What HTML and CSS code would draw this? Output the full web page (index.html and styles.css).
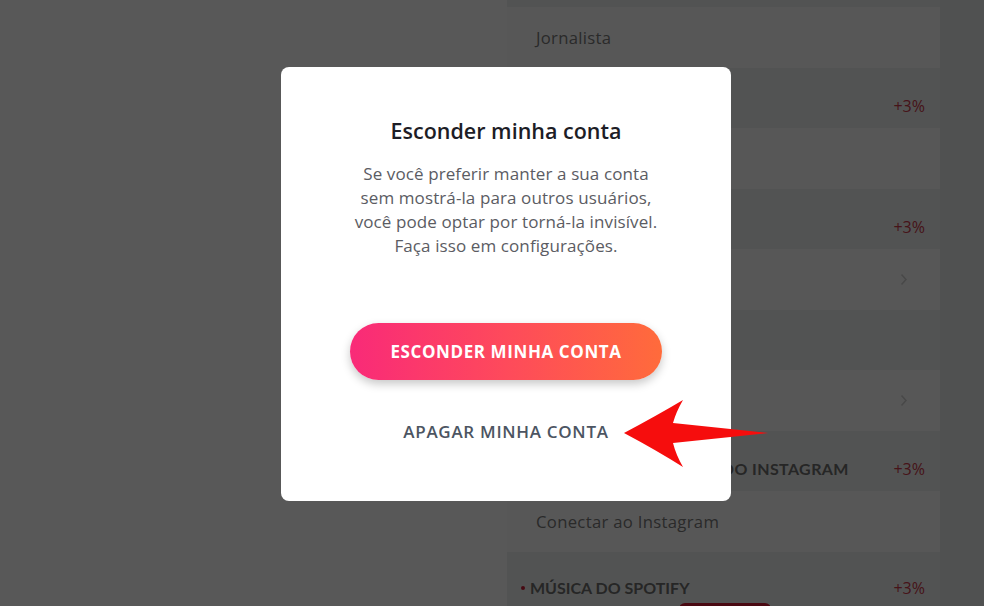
FILE: index.html
```html
<!DOCTYPE html>
<html lang="pt-BR">
<head>
<meta charset="utf-8">
<title>Configurações</title>
<link rel="stylesheet" href="styles.css">
</head>
<body>
<div class="page">
  <aside class="side"></aside>
  <main class="panel">
    <div class="row"><span class="row-text">Jornalista</span></div>
    <div class="head"><span class="head-title"></span><span class="pct">+3%</span></div>
    <div class="row"></div>
    <div class="head"><span class="head-title"></span><span class="pct">+3%</span></div>
    <div class="row"><span></span><svg class="chev" width="8" height="13" viewBox="0 0 8 13"><path d="M1.5 1.5 L6 6.5 L1.5 11.5" fill="none" stroke="#cfcfcf" stroke-width="1.6"/></svg></div>
    <div class="head"><span class="head-title"></span></div>
    <div class="row"><span></span><svg class="chev" width="8" height="13" viewBox="0 0 8 13"><path d="M1.5 1.5 L6 6.5 L1.5 11.5" fill="none" stroke="#cfcfcf" stroke-width="1.6"/></svg></div>
    <div class="head"><span class="head-title wide"><i class="dot"></i>ÚLTIMAS PUBLICAÇÕES DO INSTAGRAM</span><span class="pct">+3%</span></div>
    <div class="row"><span class="row-text">Conectar ao Instagram</span></div>
    <div class="head head-last"><span class="head-title"><i class="dot"></i>MÚSICA DO SPOTIFY</span><span class="pct">+3%</span></div>
    <div class="spot"><span class="spot-btn"></span></div>
  </main>
  <div class="gutter"></div>
</div>

<div class="overlay">
  <section class="modal">
    <h2 class="modal-title">Esconder minha conta</h2>
    <p class="modal-text">Se você preferir manter a sua conta<br>sem mostrá-la para outros usuários,<br>você pode optar por torná-la invisível.<br>Faça isso em configurações.</p>
    <button class="btn-primary">ESCONDER MINHA CONTA</button>
    <a class="btn-link" href="#">APAGAR MINHA CONTA</a>
  </section>
  <svg class="pointer" width="150" height="78" viewBox="0 0 150 78" aria-hidden="true">
    <path d="M4 38 Q36 21 63 5 Q56 17 53 28 L148 38 L53 48 Q56 60 63 72 Q36 55 4 38 Z" fill="#f60d0d"/>
  </svg>
</div>
</body>
</html>
```

FILE: styles.css
```css
html, body {
  margin: 0;
  height: 100%;
}

body {
  font-family: "Open Sans", "Lato", sans-serif;
  background: #eceeed;
  overflow: hidden;
}

.page {
  display: grid;
  grid-template-columns: 507px 433px 1fr;
  height: 606px;
  overflow: hidden;
}

.side {
  background: #fbfbfb;
}

.panel {
  background: #eceeed;
  padding-top: 7px;
  display: flex;
  flex-direction: column;
}

.gutter {
  background: #e6e9e8;
}

.row {
  height: 61px;
  flex: none;
  background: #fafafa;
  display: flex;
  align-items: center;
  justify-content: space-between;
  padding: 0 32px 0 29px;
}

.row-text {
  font-size: 16.7px;
  color: #787878;
  letter-spacing: 0.3px;
}

.chev {
  display: block;
}

.head {
  height: 60px;
  flex: none;
  box-sizing: border-box;
  padding: 28px 15px 0 14px;
  display: flex;
  justify-content: space-between;
  align-items: flex-start;
  line-height: 20px;
}

.head-last {
  height: 51px;
  padding-top: 26px;
}

.head-title {
  font-family: "Lato", sans-serif;
  font-size: 16px;
  font-weight: 700;
  color: #6e6e6e;
  display: flex;
  align-items: center;
}

.head-title.wide {
  letter-spacing: 0.4px;
}

.dot {
  width: 4px;
  height: 4px;
  border-radius: 50%;
  background: #c91c36;
  margin-right: 5px;
}

.pct {
  font-size: 16px;
  color: #c83849;
}

.spot {
  display: flex;
  justify-content: center;
}

.spot-btn {
  display: block;
  width: 92px;
  height: 20px;
  border-radius: 6px 6px 0 0;
  background: #d41b34;
  margin-left: 3px;
}

.overlay {
  position: fixed;
  inset: 0;
  background: rgba(0, 0, 0, 0.65);
}

.modal {
  position: absolute;
  left: 281px;
  top: 67px;
  width: 450px;
  height: 434px;
  box-sizing: border-box;
  background: #fff;
  border-radius: 8px;
  padding-top: 50px;
  display: flex;
  flex-direction: column;
  align-items: center;
  text-align: center;
}

.modal-title {
  margin: 0;
  font-size: 21.5px;
  line-height: 28px;
  font-weight: 600;
  color: #1d1d26;
}

.modal-text {
  margin: 17px 0 0;
  font-size: 17px;
  line-height: 24px;
  color: #5b5c63;
  letter-spacing: 0.1px;
}

.btn-primary {
  margin-top: 65px;
  width: 312px;
  height: 57px;
  border: 0;
  border-radius: 29px;
  background: linear-gradient(90deg, #f92a78 0%, #fe4a5b 50%, #ff6b3b 100%);
  box-shadow: 0 4px 10px rgba(0, 0, 0, 0.22);
  color: #fff;
  font-family: inherit;
  font-size: 17px;
  font-weight: 700;
  letter-spacing: 0.6px;
}

.btn-link {
  margin-top: 42px;
  line-height: 20px;
  font-size: 17px;
  font-weight: 600;
  color: #4c5562;
  text-decoration: none;
  letter-spacing: 0.7px;
}

.pointer {
  position: absolute;
  left: 620px;
  top: 395px;
}
```
